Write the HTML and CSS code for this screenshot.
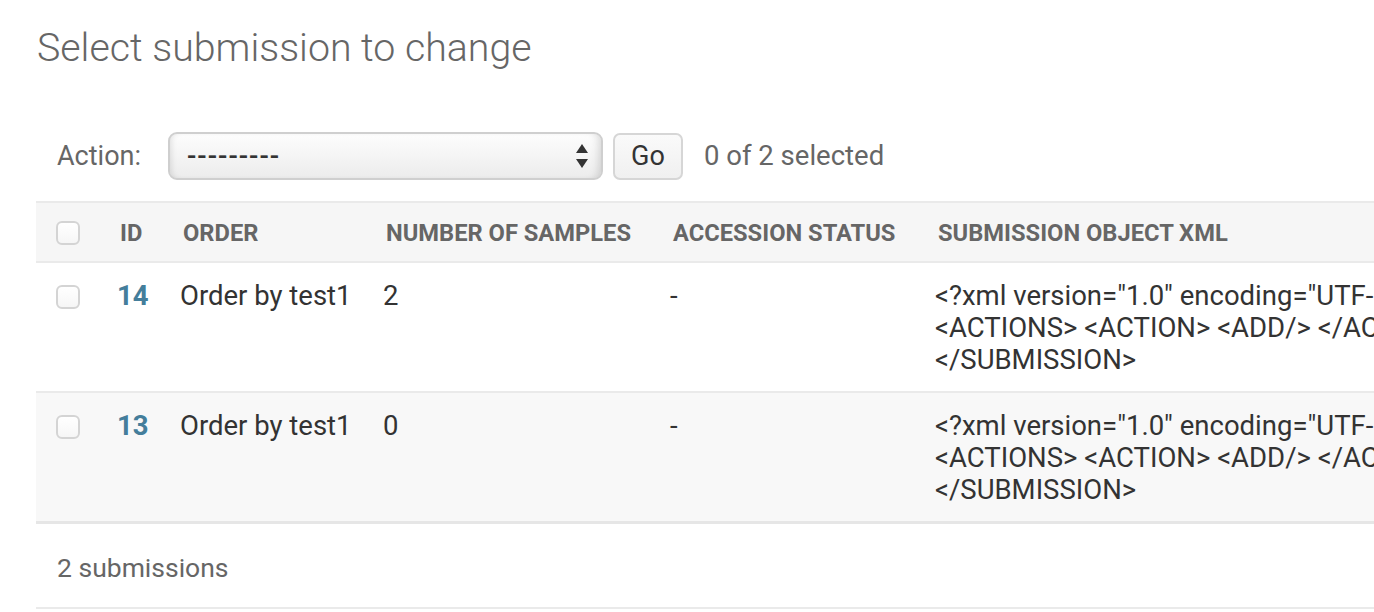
FILE: index.html
```html
<!DOCTYPE html>
<html lang="en">
<head>
<meta charset="utf-8">
<title>Select submission to change</title>
<link rel="stylesheet" href="styles.css">
</head>
<body>
<div class="content">
  <h1 class="title">Select submission to change</h1>
  <div class="changelist">
    <div class="actions">
      <label class="action-label">Action:</label>
      <div class="select">
        <span class="select-value">---------</span>
        <svg class="select-arrows" width="14" height="26" viewBox="0 0 14 26"><path d="M7 1 L13 10 L1 10 Z" fill="#333"/><path d="M1 16 L13 16 L7 25 Z" fill="#333"/></svg>
      </div>
      <button class="go">Go</button>
      <span class="counter">0 of 2 selected</span>
    </div>
    <div class="results">
      <table class="result-list">
        <thead>
          <tr>
            <th class="col-cb"><span class="cb"></span></th>
            <th class="col-id"><span class="th-text">ID</span></th>
            <th class="col-order"><span class="th-text">Order</span></th>
            <th class="col-num"><span class="th-text">Number of samples</span></th>
            <th class="col-acc"><span class="th-text">Accession status</span></th>
            <th class="col-xml"><span class="th-text">Submission object XML</span></th>
          </tr>
        </thead>
        <tbody>
          <tr class="row1">
            <td class="cell-cb"><span class="cb"></span></td>
            <th class="cell-id"><a href="#">14</a></th>
            <td>Order by test1</td>
            <td>2</td>
            <td>-</td>
            <td class="cell-xml"><span class="xml-line">&lt;?xml version="1.0" encoding="UTF-8"?&gt; &lt;SUBMISSION alias="order_14" center_name="test1"&gt;</span><span class="xml-line">&lt;ACTIONS&gt; &lt;ACTION&gt; &lt;ADD/&gt; &lt;/ACTION&gt; &lt;/ACTIONS&gt;</span><span class="xml-line">&lt;/SUBMISSION&gt;</span></td>
          </tr>
          <tr class="row2">
            <td class="cell-cb"><span class="cb"></span></td>
            <th class="cell-id"><a href="#">13</a></th>
            <td>Order by test1</td>
            <td>0</td>
            <td>-</td>
            <td class="cell-xml"><span class="xml-line">&lt;?xml version="1.0" encoding="UTF-8"?&gt; &lt;SUBMISSION alias="order_13" center_name="test1"&gt;</span><span class="xml-line">&lt;ACTIONS&gt; &lt;ACTION&gt; &lt;ADD/&gt; &lt;/ACTION&gt; &lt;/ACTIONS&gt;</span><span class="xml-line">&lt;/SUBMISSION&gt;</span></td>
          </tr>
        </tbody>
      </table>
    </div>
    <p class="paginator">2 submissions</p>
  </div>
</div>
</body>
</html>
```

FILE: styles.css
```css
html, body {
  margin: 0;
  padding: 0;
  background: #fff;
  overflow: hidden;
}
body {
  font-family: Roboto, "Liberation Sans", Arial, sans-serif;
  color: #333;
  font-size: 27.5px;
  line-height: 32px;
}
.content {
  padding: 23px 0 0 36px;
}
.title {
  margin: 0;
  font-size: 39.3px;
  line-height: 50px;
  font-weight: 300;
  color: #666;
  padding-left: 1px;
}
.changelist {
  margin-top: 59px;
}
.actions {
  display: flex;
  align-items: center;
  padding-left: 21px;
  height: 48px;
  margin-bottom: 21px;
}
.action-label {
  color: #666;
  margin-right: 28px;
  width: 83px;
  font-size: 27px;
}
.select {
  box-sizing: border-box;
  width: 435px;
  height: 48px;
  border: 2px solid #cfcfcf;
  border-radius: 9px;
  background: linear-gradient(#fdfdfd, #ececec);
  box-shadow: inset 5px 0 6px -4px rgba(0,0,0,0.12), inset -8px 0 8px -6px rgba(0,0,0,0.15);
  display: flex;
  align-items: center;
  justify-content: space-between;
  padding: 0 12px 0 17px;
}
.select-value {
  color: #333;
  letter-spacing: 1px;
  font-weight: 500;
}
.select-arrows {
  display: block;
}
.go {
  box-sizing: border-box;
  margin-left: 10px;
  width: 70px;
  height: 47px;
  border: 2px solid #d6d6d6;
  border-radius: 7px;
  background: linear-gradient(#fafafa, #f0f0f0);
  font-family: Roboto, "Liberation Sans", Arial, sans-serif;
  font-size: 27px;
  color: #333;
  padding: 0;
}
.counter {
  margin-left: 21px;
  color: #666;
}
.results {
  overflow: hidden;
}
.result-list {
  border-collapse: collapse;
  table-layout: fixed;
  width: 1800px;
}
.result-list thead th {
  background: #f6f6f6;
  border-top: 2px solid #eaeaea;
  border-bottom: 2px solid #eaeaea;
  padding: 0;
  text-align: left;
  font-size: 23.7px;
  font-weight: 700;
  color: #666;
  text-transform: uppercase;
  white-space: nowrap;
  height: 58px;
  vertical-align: middle;
}
.th-text {
  display: block;
  padding: 2px 20px 0;
  line-height: 26px;
}
.col-cb { width: 64px; }
.col-id { width: 63px; }
.col-order { width: 203px; }
.col-num { width: 287px; }
.col-acc { width: 265px; }
.col-xml { width: 918px; }
.cb {
  display: block;
  box-sizing: border-box;
  width: 24px;
  height: 24px;
  border: 2px solid #d4d4d4;
  border-radius: 6px;
  background: linear-gradient(#fff, #f6f6f6);
  margin-left: 20px;
}
.result-list thead th.col-cb .cb {
  margin-top: 1px;
}
.result-list tbody td,
.result-list tbody th {
  padding: 17px 17px 15px;
  vertical-align: top;
  text-align: left;
  font-weight: 400;
  border-bottom: 2px solid #eaeaea;
  white-space: nowrap;
  overflow: hidden;
}
.result-list tbody td.cell-cb {
  padding: 22px 0 0 0;
}
.result-list tbody .cell-id a {
  color: #447e9b;
  font-weight: 700;
  text-decoration: none;
}
.row2 td, .row2 th {
  background: #f8f8f8;
}
.result-list tbody tr.row2 td,
.result-list tbody tr.row2 th {
  border-bottom-width: 3px;
  border-bottom-color: #e6e6e6;
}
.xml-line {
  display: block;
}
.paginator {
  margin: 0;
  padding: 28px 21px 23px;
  color: #666;
  font-size: 26.5px;
  border-bottom: 2px solid #eaeaea;
}
```
